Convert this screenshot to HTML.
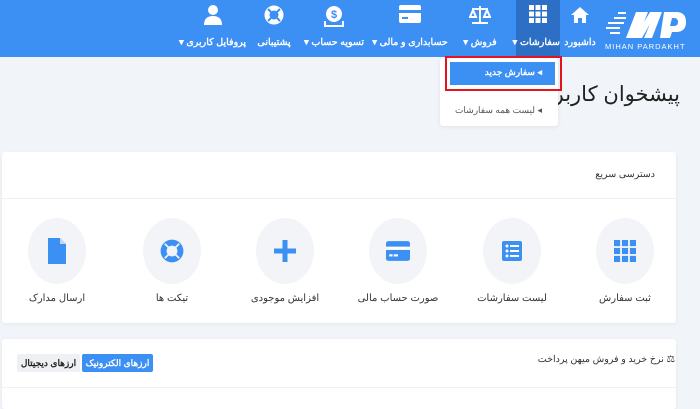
<!DOCTYPE html>
<html><head><meta charset="utf-8"><style>
*{margin:0;padding:0;box-sizing:border-box}
body{width:700px;height:400px;overflow:hidden;background:#f1f4f8;font-family:"Liberation Sans","Noto Sans CJK SC",sans-serif;position:relative}
.nav{position:absolute;left:0;top:0;width:700px;height:57px;background:#3c8ff3}
.it{position:absolute;top:0;height:57px;color:#fff;font-size:9.5px;font-weight:bold;text-align:center;direction:rtl}
.it svg{position:absolute;top:5px;left:50%;transform:translateX(-50%)}
.it span{position:absolute;top:37px;left:0;right:0;white-space:nowrap}
.card{position:absolute;background:#fff;border-radius:3px;box-shadow:0 1px 3px rgba(0,0,0,.06)}
.t{position:absolute;font-size:10px;color:#333;direction:rtl;white-space:nowrap}
.circ{position:absolute;width:58px;height:66px;border-radius:50%;background:#f2f4f7;top:218px}
.circ svg{position:absolute;left:50%;top:50%;transform:translate(-50%,-50%)}
.lbl{position:absolute;top:293px;font-size:10px;color:#333;width:100px;text-align:center;direction:rtl}
</style></head><body>
<div class="nav"></div>
<div style="position:absolute;left:516px;top:0;width:44px;height:57px;background:#2d6fc4"></div>
<svg style="position:absolute;left:604px;top:8px" width="90" height="44" viewBox="0 0 90 44">
<g fill="#fff"><rect x="14" y="4" width="8" height="2"/><rect x="10" y="9" width="12" height="2"/><rect x="4" y="14" width="16" height="2"/><rect x="2" y="19" width="14" height="2"/><rect x="6" y="24" width="10" height="2"/>
<path d="M22 30 L32 4 H44 L40 14 L46 4 H58 L48 30 H40 L46 16 L38 30 H30 L36 16 L30 30Z"/>
<path d="M60 4 H72 Q82 4 82 14 Q82 24 72 24 H68 L66 30 H56Z M68 10 L66 18 H70 Q74 18 74 14 Q74 10 70 10Z"/>
<text x="1" y="41" font-size="7.5" font-family="Liberation Sans" letter-spacing="1">MIHAN PARDAKHT</text></g></svg>
<div class="it" style="left:560px;width:40px"><svg width="20" height="20" viewBox="0 0 20 20"><path fill="#fff" d="M10 2 L19 10 H16 V18 H12 V13 H8 V18 H4 V10 H1Z"/></svg><span>داشبورد</span></div>
<div class="it" style="left:516px;width:44px"><svg width="18" height="18" viewBox="0 0 18 18" fill="#fff"><rect x="0" y="0" width="5" height="5"/><rect x="6.5" y="0" width="5" height="5"/><rect x="13" y="0" width="5" height="5"/><rect x="0" y="6.5" width="5" height="5"/><rect x="6.5" y="6.5" width="5" height="5"/><rect x="13" y="6.5" width="5" height="5"/><rect x="0" y="13" width="5" height="5"/><rect x="6.5" y="13" width="5" height="5"/><rect x="13" y="13" width="5" height="5"/></svg><span>سفارشات ▾</span></div>
<div class="it" style="left:455px;width:50px"><svg width="22" height="20" viewBox="0 0 22 20" fill="none" stroke="#fff" stroke-width="2"><path d="M11 1V18M3 18H19M3 4H19M1 12L4 5L7 12ZM15 12L18 5L21 12Z"/></svg><span>فروش ▾</span></div>
<div class="it" style="left:370px;width:80px"><svg width="22" height="18" viewBox="0 0 22 18"><rect x="0" y="0" width="22" height="18" rx="2" fill="#fff"/><rect x="0" y="5" width="22" height="3" fill="#3c8ff3"/><rect x="3" y="12" width="6" height="2" fill="#3c8ff3"/></svg><span>حسابداری و مالی ▾</span></div>
<div class="it" style="left:302px;width:64px"><svg width="20" height="22" viewBox="0 0 20 22"><circle cx="10" cy="9" r="8" fill="#fff"/><text x="10" y="13" font-size="11" text-anchor="middle" fill="#3c8ff3" font-weight="bold">$</text><path d="M1 16V21H19V16" stroke="#fff" stroke-width="2" fill="none"/></svg><span>تسویه حساب ▾</span></div>
<div class="it" style="left:254px;width:40px"><svg width="20" height="20" viewBox="0 0 20 20"><circle cx="10" cy="10" r="7" fill="none" stroke="#fff" stroke-width="5"/><g stroke="#3c8ff3" stroke-width="2"><path d="M4 4L7 7M16 4L13 7M4 16L7 13M16 16L13 13"/></g></svg><span>پشتیبانی</span></div>
<div class="it" style="left:175px;width:75px"><svg width="18" height="20" viewBox="0 0 18 20" fill="#fff"><circle cx="9" cy="5" r="5"/><path d="M0 20 Q0 11 9 11 Q18 11 18 20Z"/></svg><span>پروفایل کاربری ▾</span></div>

<div class="t" style="right:20px;top:82px;font-size:21px;color:#222">پیشخوان کاربری</div>
<div style="position:absolute;left:440px;top:58px;width:118px;height:68px;background:#fff;border-radius:3px;box-shadow:0 1px 4px rgba(0,0,0,.08)"></div>
<div style="position:absolute;left:445px;top:56px;width:117px;height:35px;border:2.5px solid #e5141c"></div>
<div style="position:absolute;left:450px;top:62px;width:105px;height:23px;background:#3c8ff3"></div>
<div class="t" style="right:158px;top:67px;color:#fff;font-size:9px;font-weight:bold">◂ سفارش جدید</div>
<div class="t" style="right:158px;top:105px;color:#555;font-size:9px">◂ لیست همه سفارشات</div>

<div class="card" style="left:2px;top:152px;width:674px;height:171px"></div>
<div style="position:absolute;left:2px;top:198px;width:674px;height:1px;background:#eef0f3"></div>
<div class="t" style="right:45px;top:169px;font-size:9.5px">دسترسی سریع</div>

<div class="circ" style="left:596px"><svg width="22" height="22" viewBox="0 0 18 18" fill="#3c8ff3"><rect x="0" y="0" width="5" height="5"/><rect x="6.5" y="0" width="5" height="5"/><rect x="13" y="0" width="5" height="5"/><rect x="0" y="6.5" width="5" height="5"/><rect x="6.5" y="6.5" width="5" height="5"/><rect x="13" y="6.5" width="5" height="5"/><rect x="0" y="13" width="5" height="5"/><rect x="6.5" y="13" width="5" height="5"/><rect x="13" y="13" width="5" height="5"/></svg></div>
<div class="circ" style="left:483px"><svg width="20" height="20" viewBox="0 0 20 20"><rect width="20" height="20" rx="2" fill="#3c8ff3"/><g fill="#fff"><circle cx="5" cy="5" r="1.5"/><circle cx="5" cy="10" r="1.5"/><circle cx="5" cy="15" r="1.5"/><rect x="8" y="4" width="9" height="2"/><rect x="8" y="9" width="9" height="2"/><rect x="8" y="14" width="9" height="2"/></g></svg></div>
<div class="circ" style="left:369px"><svg width="24" height="20" viewBox="0 0 22 18"><rect width="22" height="18" rx="2" fill="#3c8ff3"/><rect y="5" width="22" height="3" fill="#fff"/><rect x="3" y="12" width="3" height="2" fill="#fff"/><rect x="7" y="12" width="4" height="2" fill="#fff"/></svg></div>
<div class="circ" style="left:256px"><svg width="22" height="22" viewBox="0 0 22 22"><path d="M11 0V22M0 11H22" stroke="#3c8ff3" stroke-width="5"/></svg></div>
<div class="circ" style="left:143px"><svg width="24" height="24" viewBox="0 0 20 20"><circle cx="10" cy="10" r="7" fill="none" stroke="#3c8ff3" stroke-width="5"/><g stroke="#f2f4f7" stroke-width="1.5"><path d="M4 4L7 7M16 4L13 7M4 16L7 13M16 16L13 13"/></g></svg></div>
<div class="circ" style="left:28px"><svg width="18" height="26" viewBox="0 0 18 26"><path d="M0 0H12L18 6V26H0Z" fill="#3c8ff3"/><path d="M12 0V6H18" fill="#bcd7fb"/></svg></div>

<div class="lbl" style="left:575px">ثبت سفارش</div>
<div class="lbl" style="left:462px">لیست سفارشات</div>
<div class="lbl" style="left:348px">صورت حساب مالی</div>
<div class="lbl" style="left:235px">افزایش موجودی</div>
<div class="lbl" style="left:122px">تیکت ها</div>
<div class="lbl" style="left:7px">ارسال مدارک</div>

<div class="card" style="left:2px;top:339px;width:674px;height:70px"></div>
<div style="position:absolute;left:2px;top:387px;width:674px;height:1px;background:#eef0f3"></div>
<div class="t" style="right:25px;top:354px;font-size:9.5px">⚖ نرخ خرید و فروش میهن پرداخت</div>
<div style="position:absolute;left:82px;top:354px;width:71px;height:18px;background:#3c8ff3;border-radius:2px;color:#fff;font-size:9px;font-weight:bold;text-align:center;line-height:18px;direction:rtl">ارزهای الکترونیک</div>
<div style="position:absolute;left:17px;top:354px;width:63px;height:18px;background:#eef0f3;border-radius:2px;color:#222;font-size:9px;font-weight:bold;text-align:center;line-height:18px;direction:rtl">ارزهای دیجیتال</div>
</body></html>
